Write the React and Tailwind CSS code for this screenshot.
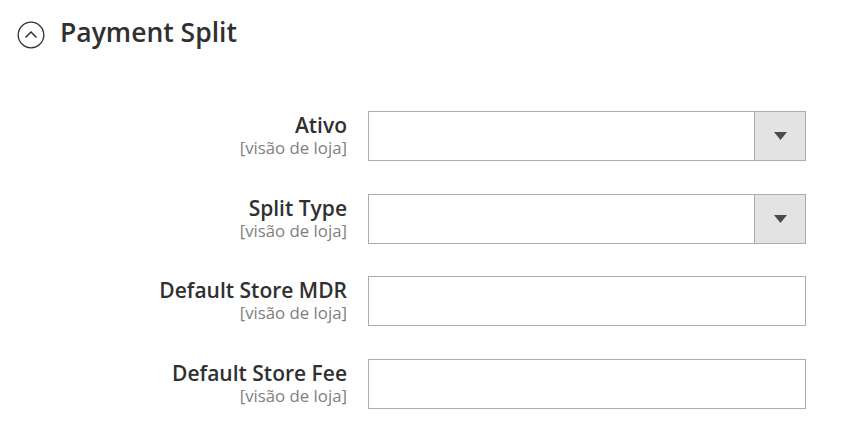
const fields = [
  { label: 'Ativo', type: 'select' },
  { label: 'Split Type', type: 'select' },
  { label: 'Default Store MDR', type: 'text' },
  { label: 'Default Store Fee', type: 'text' },
]

function Field({ label, type }){
  return (
    <div className="flex items-start">
      <div className="w-[347px] shrink-0 text-right pt-[2px]">
        <div className="text-[21px] leading-[25px] font-semibold text-[#303030]">{label}</div>
        <div className="text-[16.8px] leading-[19px] text-[#808080]">[visão de loja]</div>
      </div>
      <div className="ml-[21px] w-[438px] h-[50px] border border-[#adadad] bg-white flex">
        <div className="flex-1" />
        {type === 'select' && (
          <div className="w-[51px] h-full bg-[#e3e3e3] border-l border-[#adadad] flex items-center justify-center">
            <svg width="13" height="8" viewBox="0 0 13 8"><path d="M0 0h13L6.5 8z" fill="#514943" /></svg>
          </div>
        )}
      </div>
    </div>
  )
}

export default function App(){
  return (
    <div className="w-[846px] h-[445px] bg-white font-['Open_Sans',sans-serif] overflow-hidden">
      <div className="flex items-start pt-[17px] pl-[17px]">
        <svg className="mt-[4px]" width="28" height="28" viewBox="0 0 28 28">
          <circle cx="14" cy="14" r="12.8" fill="none" stroke="#303030" strokeWidth="1.3" />
          <path d="M8.5 16.5 14 11l5.5 5.5" fill="none" stroke="#303030" strokeWidth="1.5" />
        </svg>
        <h2 className="ml-[15px] text-[26.5px] leading-[30px] font-semibold text-[#303030]">Payment Split</h2>
      </div>
      <div className="mt-[62px] flex flex-col gap-[32.5px]">
        {fields.map(f => <Field key={f.label} {...f} />)}
      </div>
    </div>
  )
}
